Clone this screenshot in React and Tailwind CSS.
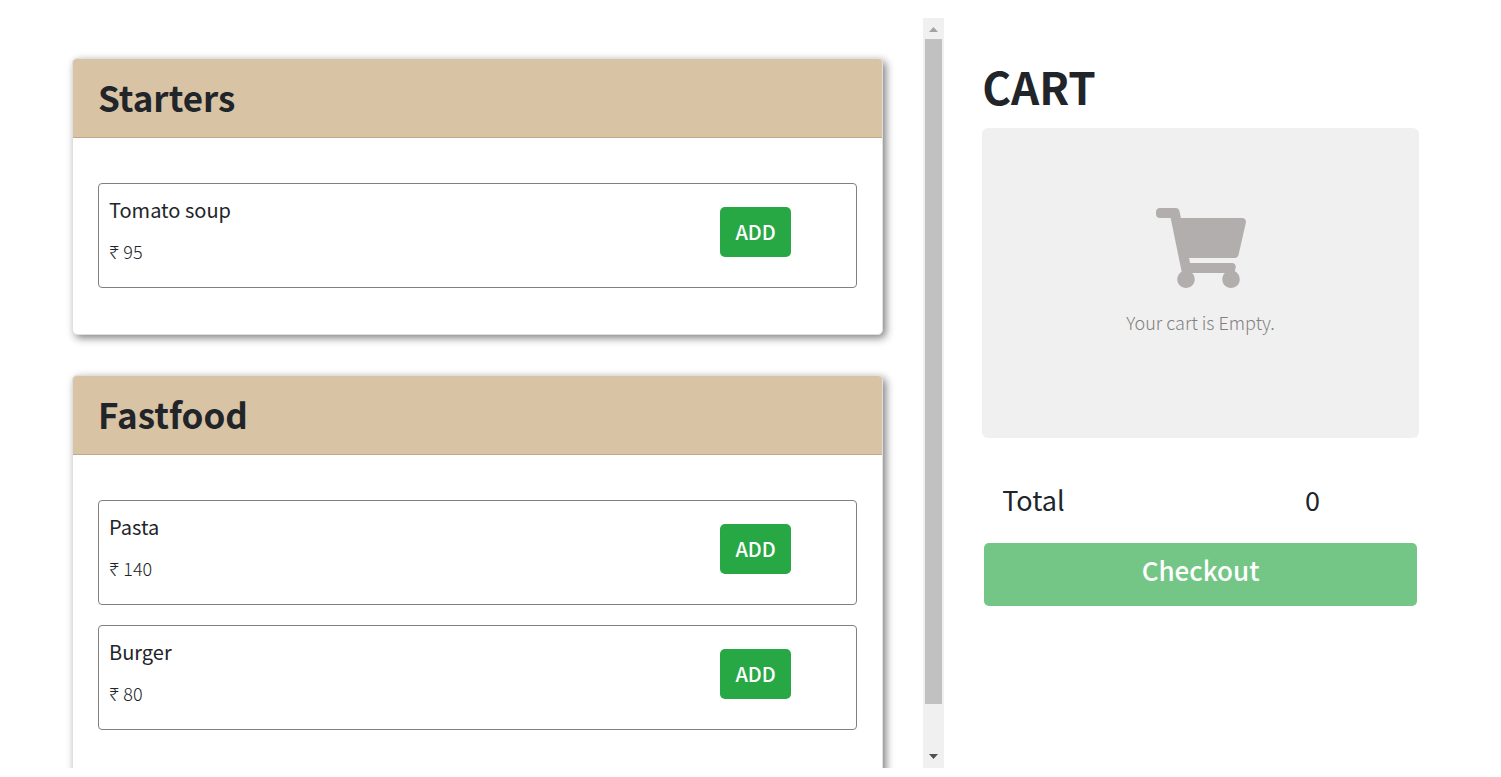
import { FaShoppingCart } from "react-icons/fa";

const menu = [
  { name: "Starters", items: [{ name: "Tomato soup", price: 95 }] },
  {
    name: "Fastfood",
    items: [
      { name: "Pasta", price: 140 },
      { name: "Burger", price: 80 },
    ],
  },
];

function MenuItem({ item }) {
  return (
    <li className="flex h-[105px] items-start justify-between rounded border border-[#808080] pl-[10px] pr-[65px]">
      <div>
        <h3 className="mt-[11px] text-xl leading-[30px] font-normal">{item.name}</h3>
        <p className="mt-[11px] text-lg leading-[30px] font-light">₹ {item.price}</p>
      </div>
      <button
        type="button"
        className="mt-[23px] h-[50px] w-[71px] rounded-[5px] bg-[#28a745] text-center text-xl leading-[50px] font-medium text-white"
      >
        ADD
      </button>
    </li>
  );
}

function MenuCard({ category }) {
  return (
    <section className="rounded-[5px] border border-[#dfdfdf] bg-white shadow-[3px_3px_9px_#808080]">
      <h2 className="h-[79px] rounded-t border-b border-[#bfa987] bg-[#d9c3a5] px-[25px] text-[35px] leading-[76px] font-bold">
        {category.name}
      </h2>
      <ul className="flex flex-col gap-5 px-[25px] pt-[45px] pb-[46px]">
        {category.items.map((item) => (
          <MenuItem key={item.name} item={item} />
        ))}
      </ul>
    </section>
  );
}

function ScrollTrack() {
  return (
    <div className="flex w-[21px] shrink-0 flex-col items-center bg-[#f0f0f0]" aria-hidden="true">
      <svg className="h-[21px] w-[21px] shrink-0" viewBox="0 0 21 21">
        <path d="M6 14h9l-4.500-5z" fill="#a3a3a3" />
      </svg>
      <div className="w-[17px] flex-[665] bg-[#c1c1c1]" />
      <div className="flex-[43]" />
      <svg className="h-[21px] w-[21px] shrink-0" viewBox="0 0 21 21">
        <path d="M6 7h9l-4.500 5z" fill="#505050" />
      </svg>
    </div>
  );
}

export default function App() {
  return (
    <main className="flex h-screen bg-white pt-[18px] pb-[9px] font-['Noto_Sans_CJK_JP','Noto_Sans',sans-serif] text-[#212529]">
      <div className="flex w-[62.9%] shrink-0">
        <div className="flex min-w-0 flex-1 flex-col gap-10 overflow-y-auto pt-10 pr-10 pb-10 pl-[72px] [scrollbar-width:none]">
          {menu.map((category) => (
            <MenuCard key={category.name} category={category} />
          ))}
        </div>
        <ScrollTrack />
      </div>
      <aside className="min-w-0 flex-1 pt-10 pr-[82px] pl-[38px]">
        <h1 className="h-[70px] text-[44px] leading-[56px] font-bold">CART</h1>
        <div className="flex h-[310px] flex-col items-center rounded-md bg-[#f0f0f0] pt-20">
          <FaShoppingCart className="h-20 w-[90px] text-[#b2aeae]" />
          <p className="mt-[19px] text-lg leading-[30px] font-light text-[#808080]">Your cart is Empty.</p>
        </div>
        <div className="mt-[43px] flex justify-between pr-[99px] pl-5 text-[27px] leading-[38px]">
          <span>Total</span>
          <span>0</span>
        </div>
        <div className="mt-6 px-[2px]">
          <button
            type="button"
            disabled
            className="block h-[63px] w-full rounded-[5px] bg-[#74c686] pb-[10px] text-center text-[26px] leading-[53px] font-medium text-white"
          >
            Checkout
          </button>
        </div>
      </aside>
    </main>
  );
}
